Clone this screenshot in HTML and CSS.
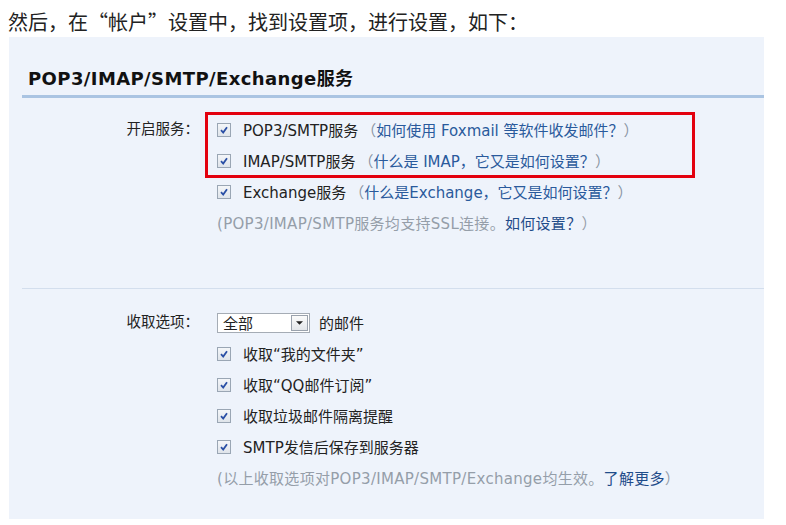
FILE: index.html
```html
<!DOCTYPE html>
<html lang="zh-CN">
<head>
<meta charset="utf-8">
<title>POP3/IMAP/SMTP/Exchange服务</title>
<link rel="stylesheet" href="styles.css">
</head>
<body>
<p class="intro">然后，在“帐户”设置中，找到设置项，进行设置，如下：</p>
<div class="panel">
  <h2 class="panel-title">POP3/IMAP/SMTP/Exchange服务</h2>
  <div class="section section-services">
    <div class="label">开启服务：</div>
    <div class="fields">
      <div class="highlight">
        <div class="row"><span class="cb"><svg viewBox="0 0 10 10"><path d="M2 5.2 L4.2 7.6 L8 2.2" /></svg></span><span class="txt">POP3/SMTP服务</span><span class="hint">（<a class="link">如何使用 Foxmail 等软件收发邮件？</a>）</span></div>
        <div class="row"><span class="cb"><svg viewBox="0 0 10 10"><path d="M2 5.2 L4.2 7.6 L8 2.2" /></svg></span><span class="txt">IMAP/SMTP服务</span><span class="hint">（<a class="link">什么是 IMAP，它又是如何设置？</a>）</span></div>
      </div>
      <div class="row"><span class="cb"><svg viewBox="0 0 10 10"><path d="M2 5.2 L4.2 7.6 L8 2.2" /></svg></span><span class="txt">Exchange服务</span><span class="hint">（<a class="link">什么是Exchange，它又是如何设置？</a>）</span></div>
      <div class="row note">(POP3/IMAP/SMTP服务均支持SSL连接。<a class="link strong">如何设置？</a>）</div>
    </div>
  </div>
  <div class="section section-fetch">
    <div class="label">收取选项：</div>
    <div class="fields">
      <div class="row"><span class="select"><span class="select-val">全部</span><span class="select-btn"><svg viewBox="0 0 8 4"><path d="M0 0 H8 L4 4 Z"/></svg></span></span><span class="txt">的邮件</span></div>
      <div class="row"><span class="cb"><svg viewBox="0 0 10 10"><path d="M2 5.2 L4.2 7.6 L8 2.2" /></svg></span><span class="txt">收取“我的文件夹”</span></div>
      <div class="row"><span class="cb"><svg viewBox="0 0 10 10"><path d="M2 5.2 L4.2 7.6 L8 2.2" /></svg></span><span class="txt">收取“QQ邮件订阅”</span></div>
      <div class="row"><span class="cb"><svg viewBox="0 0 10 10"><path d="M2 5.2 L4.2 7.6 L8 2.2" /></svg></span><span class="txt">收取垃圾邮件隔离提醒</span></div>
      <div class="row"><span class="cb"><svg viewBox="0 0 10 10"><path d="M2 5.2 L4.2 7.6 L8 2.2" /></svg></span><span class="txt">SMTP发信后保存到服务器</span></div>
      <div class="row note">(以上收取选项对POP3/IMAP/SMTP/Exchange均生效。<a class="link strong">了解更多</a>）</div>
    </div>
  </div>
</div>
</body>
</html>
```
FILE: styles.css
```css
html, body {
  margin: 0;
  padding: 0;
  background: #ffffff;
}
body {
  font-family: "DejaVu Sans", "Noto Sans CJK SC", sans-serif;
  color: #222;
}
.intro {
  margin: 0;
  padding: 10px 0 0 8px;
  height: 27px;
  font-family: "Noto Sans CJK SC", sans-serif;
  font-size: 20px;
  line-height: 24px;
  color: #222;
}
.panel {
  margin-left: 9px;
  width: 755px;
  height: 482px;
  background: #eef3fb;
}
.panel-title {
  margin: 0 0 0 13px;
  padding: 32px 0 6px 6px;
  height: 20px;
  font-size: 18px;
  letter-spacing: 0.4px;
  line-height: 20px;
  font-weight: bold;
  color: #111;
  border-bottom: 3px solid #aac4e2;
}
.section {
  display: grid;
  grid-template-columns: 198px 1fr;
  font-size: 15px;
  margin-left: 13px;
}
.section-services {
  padding-top: 16px;
  height: 174px;
  border-bottom: 1px solid #d3deed;
}
.section-fetch {
  padding-top: 18px;
}
.label {
  grid-column: 1;
  height: 31px;
  line-height: 31px;
  text-align: right;
  padding-right: 21px;
  margin-left: -13px;
  font-size: 14.5px;
  color: #222;
}
.fields {
  grid-column: 2;
  margin-left: -13px;
}
.highlight {
  width: 486px;
  outline: 3px solid #e3000e;
  outline-offset: -1px;
}
.row {
  display: flex;
  align-items: center;
  height: 31px;
  padding-left: 10px;
  white-space: nowrap;
}
.cb {
  width: 12px;
  height: 12px;
  border: 1px solid #9aa6b4;
  background: linear-gradient(#f4f6f9, #dfe4ea);
  display: inline-flex;
  align-items: center;
  justify-content: center;
  margin-right: 12px;
  flex: none;
}
.cb svg {
  width: 10px;
  height: 10px;
}
.cb path {
  fill: none;
  stroke: #2a4fa5;
  stroke-width: 1.8;
}
.txt {
  color: #222;
}
.hint {
  color: #8a95a3;
  margin-left: 3px;
}
.link {
  color: #2a5a9c;
  text-decoration: none;
}
.link.strong {
  color: #1f4c8a;
}
.note {
  color: #959ea9;
  letter-spacing: 0.3px;
}
.select {
  display: inline-flex;
  align-items: center;
  width: 85px;
  height: 18px;
  border: 1px solid #a5acb5;
  background: #fff;
  margin-right: 9px;
  padding: 0 1px 0 5px;
}
.select-val {
  flex: 1;
}
.select-btn {
  width: 15px;
  height: 14px;
  border: 1px solid #9aa2ad;
  background: linear-gradient(#fbfbfb, #e3e6ea);
  display: inline-flex;
  align-items: center;
  justify-content: center;
}
.select-btn svg {
  width: 7px;
  height: 4px;
  fill: #222;
}
```
